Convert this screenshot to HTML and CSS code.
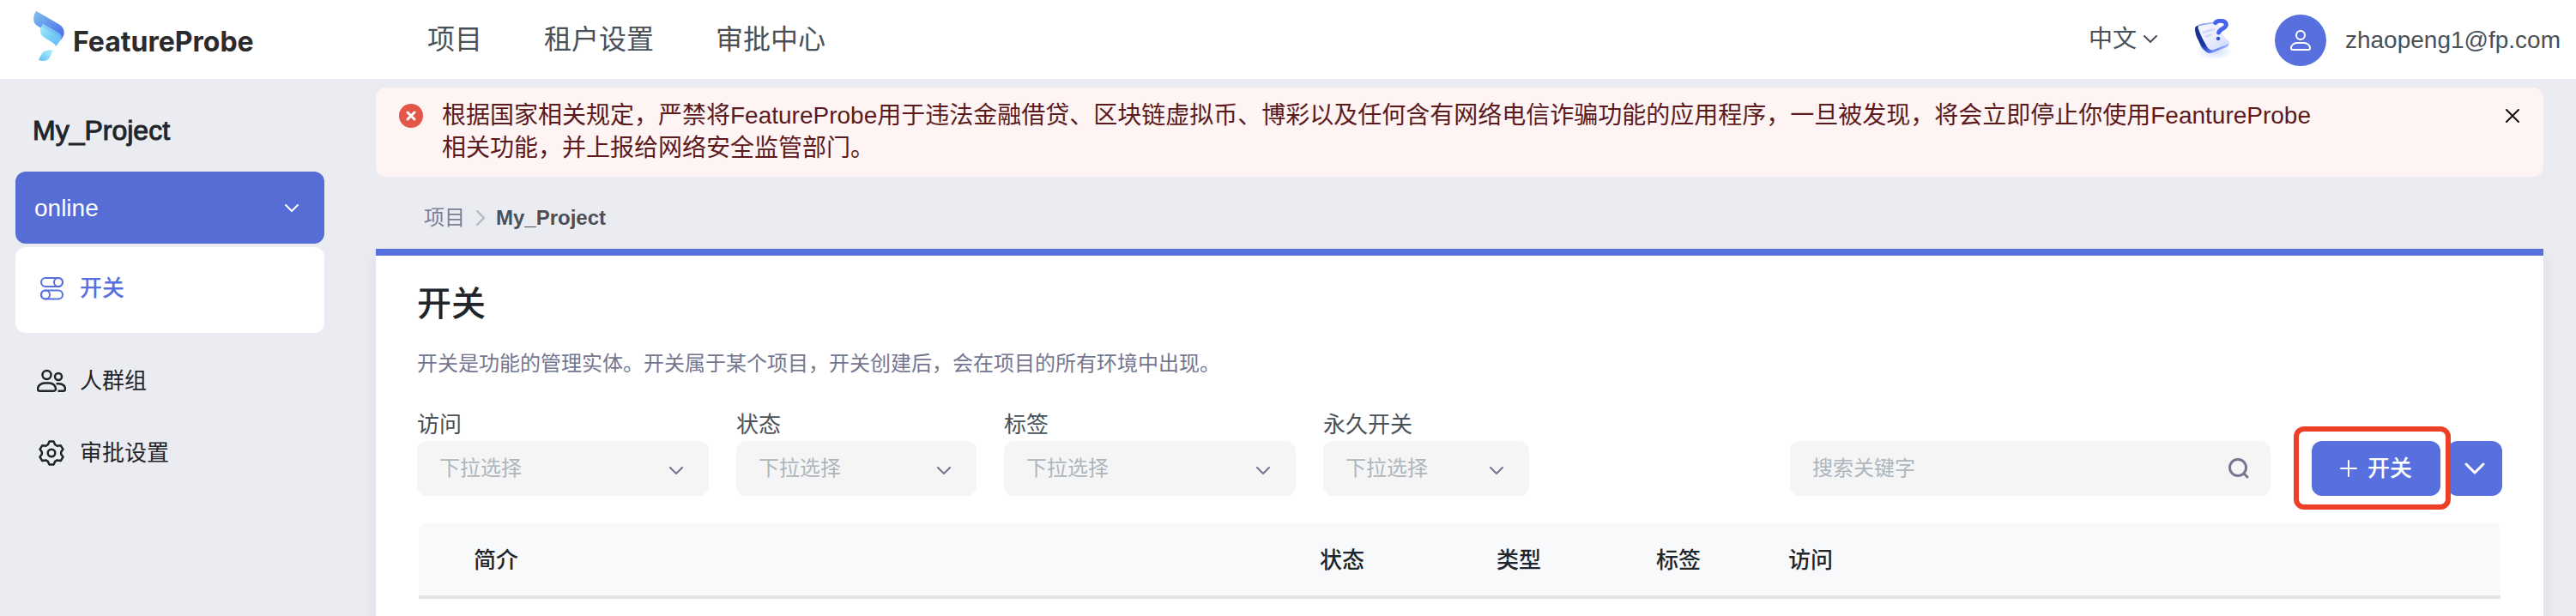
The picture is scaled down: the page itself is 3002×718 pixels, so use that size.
FILE: index.html
```html
<!DOCTYPE html>
<html lang="zh-CN">
<head>
<meta charset="utf-8">
<meta name="viewport" content="width=device-width, initial-scale=1">
<title>FeatureProbe</title>
<link rel="stylesheet" href="styles.css">
</head>
<body>
<header class="header">
  <a class="brand" href="#">
    <svg class="brand-mark" viewBox="0 0 108 177" aria-hidden="true">
      <defs>
        <linearGradient id="g1" x1="0" y1="0" x2="1" y2="1"><stop offset="0" stop-color="#7cc0ef"/><stop offset="1" stop-color="#4a68e6"/></linearGradient>
        <linearGradient id="g2" x1="0" y1="0" x2="1" y2="1"><stop offset="0" stop-color="#a9f0f6"/><stop offset=".6" stop-color="#74cbf8"/><stop offset="1" stop-color="#6ab8fa"/></linearGradient>
        <linearGradient id="g3" x1="1" y1="0" x2="0" y2="1"><stop offset="0" stop-color="#b2f5f5"/><stop offset="1" stop-color="#62bcf8"/></linearGradient>
      </defs>
      <path fill="url(#g1)" d="M10 0 88 45C104 54 108 68 107 78 106 86 101 94 98 99L16 53C0 44 0 32 1 20 2 12 6 5 10 0Z"/>
      <path fill="url(#g2)" d="M33 44 88 76C98 82 101 90 97 98L79 123C77 117 70 112 62 107L34 89C24 83 22 66 26 57Z"/>
      <path fill="#4f8cf0" opacity=".25" d="M33 44 88 76C98 82 101 90 97 98 92 88 84 84 76 80L28 54Z"/>
      <path fill="url(#g3)" d="M69 137C52 133 35 137 28 151L18 170C28 176 44 176 53 167 60 159 63 146 69 137Z"/>
    </svg>
    <span class="brand-name">FeatureProbe</span>
  </a>
  <nav class="nav">
    <a href="#">项目</a>
    <a href="#">租户设置</a>
    <a href="#">审批中心</a>
  </nav>
  <div class="account">
    <button class="lang" type="button">中文
      <svg class="chev" viewBox="0 0 16 10" aria-hidden="true"><path d="M1 1l7 7 7-7"/></svg>
    </button>
    <a class="help" href="#" aria-label="帮助">
      <svg viewBox="0 0 132 144" aria-hidden="true">
        <defs>
          <linearGradient id="h1" x1="0" y1="0" x2="1" y2=".7"><stop offset="0" stop-color="#1c2f86"/><stop offset=".5" stop-color="#17349f"/><stop offset=".75" stop-color="#5c7cf0"/><stop offset="1" stop-color="#9fb4ff"/></linearGradient>
          <linearGradient id="h2" x1="0" y1="0" x2="1" y2="1"><stop offset="0" stop-color="#f6f7ff"/><stop offset=".6" stop-color="#e8ebfe"/><stop offset="1" stop-color="#c9d2fc"/></linearGradient>
          <radialGradient id="h3"><stop offset="0" stop-color="#b9c8ff" stop-opacity=".7"/><stop offset="1" stop-color="#b9c8ff" stop-opacity="0"/></radialGradient>
        </defs>
        <ellipse cx="68" cy="112" rx="64" ry="32" fill="url(#h3)"/>
        <path fill="#8fa7f8" d="M4 32C8 22 14 18 22 17L62 12 80 24 46 118C34 112 24 106 20 98Z"/>
        <path fill="url(#h1)" d="M0 34C1 27 5 24 11 24L42 98 60 110 118 84C120 90 116 96 108 100L62 118C52 122 44 121 38 114 26 102 18 90 12 76 4 62 0 48 0 34Z"/>
        <path fill="url(#h2)" d="M10 30C11 26 14 25 18 24L70 14C80 14 86 22 88 32 92 48 104 66 119 79 121 84 118 87 112 90L66 107C56 110 50 108 44 99 30 80 18 54 10 30Z"/>
        <path fill="#cfd6f8" d="M26 44 66 32 68 39 28 51ZM34 59 56 52 59 59 37 66Z"/>
        <path fill="none" stroke="#4363ea" stroke-width="15" stroke-linecap="round" d="M71 14C80 3 107 5 109 19 111 33 85 34 83 48"/>
        <circle cx="81" cy="69" r="7" fill="#3557dd"/>
      </svg>
    </a>
    <a class="user" href="#">
      <span class="avatar">
        <svg viewBox="0 0 26 26" aria-hidden="true"><circle cx="13" cy="7" r="5"/><path d="M9 16h8c4 0 7 3 7 6 0 1-1 2-2 2H4c-1 0-2-1-2-2 0-3 3-6 7-6Z"/></svg>
      </span>
      <span>zhaopeng1@fp.com</span>
    </a>
  </div>
</header>

<div class="layout">
  <aside class="sidebar">
    <h2 class="project">My_Project</h2>
    <button class="env" type="button">online
      <svg class="chev" viewBox="0 0 16 10" aria-hidden="true"><path d="M1 1l7 7 7-7"/></svg>
    </button>
    <nav class="menu">
      <a class="menu-item active" href="#">
        <svg viewBox="0 0 34 30" aria-hidden="true"><rect x="5" y="3" width="25" height="10" rx="5"/><circle cx="25" cy="8" r="5"/><rect x="5" y="17.5" width="25" height="10" rx="5"/><circle cx="10" cy="22.5" r="5"/></svg>
        开关
      </a>
      <a class="menu-item" href="#">
        <svg viewBox="0 0 34 30" aria-hidden="true"><circle cx="11.500" cy="8" r="5"/><circle cx="25" cy="10" r="4"/><path d="M9 17.500h5.500c4 0 7.500 3 7.500 7 0 1-1 2.200-2.200 2.200H3.200C2 26.700 1 25.700 1 24.500c0-4 4-7 8-7ZM23.500 18.200h2.500c4 0 7 2.800 7 6.300 0 1.200-1 2.200-2.200 2.200H25.500"/></svg>
        人群组
      </a>
      <a class="menu-item" href="#">
        <svg viewBox="0 0 34 30" aria-hidden="true"><circle cx="17" cy="15" r="4.300"/><path d="M14.500 1.500h5l1.600 3.800 2.500 1.500 4.200-.5 2.700 4.300-2.300 3.200v2.600l2.300 3.200-2.700 4.400-4.200-.6-2.500 1.500-1.600 3.700h-5l-1.600-3.700-2.500-1.500-4.200.6-2.700-4.400 2.300-3.200v-2.600l-2.300-3.200 2.700-4.300 4.200.5 2.500-1.500Z"/></svg>
        审批设置
      </a>
    </nav>
  </aside>

  <main class="main">
    <div class="alert" role="alert">
      <svg class="alert-icon" viewBox="0 0 28 28" aria-hidden="true"><circle cx="14" cy="14" r="14"/><path d="M10 10l8 8M18 10l-8 8"/></svg>
      <p>根据国家相关规定，严禁将FeatureProbe用于违法金融借贷、区块链虚拟币、博彩以及任何含有网络电信诈骗功能的应用程序，一旦被发现，将会立即停止你使用FeantureProbe<br>相关功能，并上报给网络安全监管部门。</p>
      <button class="close" type="button" aria-label="关闭">
        <svg viewBox="0 0 16 16" aria-hidden="true"><path d="M1 1l14 14M15 1L1 15"/></svg>
      </button>
    </div>

    <nav class="crumbs" aria-label="面包屑">
      <a href="#">项目</a>
      <svg viewBox="0 0 10 18" aria-hidden="true"><path d="M1 1l8 8-8 8"/></svg>
      <b>My_Project</b>
    </nav>

    <section class="content">
      <h1>开关</h1>
      <p class="desc">开关是功能的管理实体。开关属于某个项目，开关创建后，会在项目的所有环境中出现。</p>

      <div class="toolbar">
        <div class="field wide">
          <label for="visit">访问</label>
          <div class="select"><select id="visit"><option>下拉选择</option></select><svg class="chev" viewBox="0 0 16 10" aria-hidden="true"><path d="M1 1l7 7 7-7"/></svg></div>
        </div>
        <div class="field medium">
          <label for="status">状态</label>
          <div class="select"><select id="status"><option>下拉选择</option></select><svg class="chev" viewBox="0 0 16 10" aria-hidden="true"><path d="M1 1l7 7 7-7"/></svg></div>
        </div>
        <div class="field wide">
          <label for="tag">标签</label>
          <div class="select"><select id="tag"><option>下拉选择</option></select><svg class="chev" viewBox="0 0 16 10" aria-hidden="true"><path d="M1 1l7 7 7-7"/></svg></div>
        </div>
        <div class="field narrow">
          <label for="permanent">永久开关</label>
          <div class="select"><select id="permanent"><option>下拉选择</option></select><svg class="chev" viewBox="0 0 16 10" aria-hidden="true"><path d="M1 1l7 7 7-7"/></svg></div>
        </div>
        <div class="search">
          <input type="text" placeholder="搜索关键字" aria-label="搜索关键字">
          <svg viewBox="0 0 26 26" aria-hidden="true"><circle cx="12" cy="12" r="9.500"/><path d="M19 19l4 4"/></svg>
        </div>
        <div class="actions">
          <div class="highlight">
            <button class="btn create" type="button">
              <svg viewBox="0 0 20 20" aria-hidden="true"><path d="M10 1v18M1 10h18"/></svg>
              开关
            </button>
          </div>
          <button class="btn more" type="button" aria-label="更多">
            <svg viewBox="0 0 24 16" aria-hidden="true"><path d="M2 3l10 10L22 3"/></svg>
          </button>
        </div>
      </div>

      <table class="table">
        <thead>
          <tr><th>简介</th><th class="c-status">状态</th><th class="c-type">类型</th><th class="c-tag">标签</th><th class="c-visit">访问</th></tr>
        </thead>
      </table>
    </section>
  </main>
</div>
</body>
</html>
```
FILE: styles.css
```css
* { box-sizing: border-box; }
body {
  margin: 0;
  min-height: 100vh;
  display: flex;
  flex-direction: column;
  background: #ebecf1;
  color: #212529;
  font: 26px/38px "Liberation Sans", "Noto Sans CJK SC", sans-serif;
}
a { color: inherit; text-decoration: none; }
button, input, select { font: inherit; color: inherit; border: 0; background: none; margin: 0; padding: 0; }
button { cursor: pointer; }
h1, h2, p { margin: 0; }
svg { display: block; flex: none; fill: none; stroke-linecap: round; stroke-linejoin: round; }
.chev { width: 16px; height: 10px; stroke: currentColor; stroke-width: 2; }

.header {
  display: flex;
  align-items: center;
  height: 92px;
  padding-right: 18px;
  background: #fff;
  color: #495057;
}
.brand { display: flex; gap: 10px; width: 498px; padding: 0 0 8px 39px; }
.brand-mark { width: 36px; height: 59px; }
.brand-name { padding-top: 17px; font: 700 32px/38px Inter, "Liberation Sans", sans-serif; color: #2b2b2b; }
.nav { display: flex; gap: 72px; font-size: 32px; }
.account { display: flex; align-items: center; margin-left: auto; font-size: 28px; }
.lang { display: flex; align-items: center; gap: 8px; margin-right: 44px; }
.help { margin-right: 49px; }
.help svg { width: 44px; height: 48px; }
.user { display: flex; align-items: center; gap: 22px; padding-top: 2px; }
.avatar { display: grid; place-items: center; width: 60px; height: 60px; border-radius: 50%; background: #5870dd; }
.avatar svg { width: 26px; height: 26px; stroke: #fff; stroke-width: 2; }

.layout { flex: 1; display: flex; }
.sidebar { width: 438px; padding: 40px 60px 0 18px; flex: none; }
.project { padding: 0 20px; font-size: 32px; line-height: 40px; font-weight: 400; -webkit-text-stroke: 1px currentColor; }
.env {
  display: flex;
  align-items: center;
  justify-content: space-between;
  width: 100%;
  height: 84px;
  margin-top: 28px;
  padding: 2px 30px 0 22px;
  border-radius: 12px;
  background: #566dd6;
  color: #fff;
  font-size: 28px;
}
.menu { margin-top: 4px; }
.menu-item { display: flex; align-items: center; gap: 16px; height: 84px; padding: 0 25px; }
.menu-item svg { width: 34px; height: 30px; stroke: currentColor; stroke-width: 2.5; }
.menu-item.active { height: 100px; margin-bottom: 14px; padding-bottom: 4px; border-radius: 12px; background: #fff; color: #5870dd; font-weight: 500; }
.menu-item.active svg { stroke-width: 2; }

.main { flex: 1; min-width: 0; display: flex; flex-direction: column; padding: 10px 38px 0 0; }
.alert { display: flex; align-items: flex-start; padding: 14px 28px 14px 27px; border-radius: 12px; background: #fdf4f3; color: #5c1a1d; font-size: 28px; }
.alert-icon { width: 28px; height: 28px; margin: 5px 22px 0 0; }
.alert-icon circle { fill: #e45648; }
.alert-icon path { stroke: #fff; stroke-width: 3; }
.close { margin: 11px 0 0 auto; color: #111; }
.close svg { width: 16px; height: 16px; stroke: currentColor; stroke-width: 2; }
.crumbs { display: flex; align-items: center; gap: 13px; height: 84px; padding: 12px 56px 0; font-size: 24px; color: #7d7f96; }
.crumbs svg { width: 10px; height: 18px; stroke: #adb5bd; stroke-width: 2; }
.crumbs b { color: #495057; }

.content { flex: 1; padding: 32px 48px 0; border-top: 8px solid #5870dd; background: #fff; box-shadow: 0 10px 20px rgba(40, 40, 80, .08); }
h1 { font-size: 40px; line-height: 48px; font-weight: 500; }
.desc { margin: 30px 0 36px; font-size: 24px; line-height: 32px; color: #74768f; }

.toolbar { display: flex; align-items: flex-end; gap: 32px; }
.field { display: flex; flex-direction: column; color: #495057; }
.wide { width: 340px; }
.medium { width: 280px; }
.narrow { width: 240px; }
.select { position: relative; color: #74768f; }
.select select { width: 100%; height: 64px; padding: 0 26px; border-radius: 12px; background: #f5f5f5; appearance: none; font-size: 24px; color: #adb5bd; }
.select .chev { position: absolute; right: 30px; top: 30px; pointer-events: none; }
.search { display: flex; align-items: center; width: 560px; height: 64px; margin-left: auto; padding: 0 24px 0 26px; border-radius: 12px; background: #f5f5f5; color: #74768f; }
.search input { flex: 1; min-width: 0; font-size: 24px; outline: 0; }
.search input::placeholder { color: #adb5bd; opacity: 1; }
.search svg { width: 26px; height: 26px; stroke: currentColor; stroke-width: 3; }
.actions { display: flex; gap: 8px; margin-left: 16px; }
.highlight { position: relative; }
.highlight::after { content: ""; position: absolute; z-index: 1; inset: -17px -12px -16px -21px; border: 6px solid #ec4026; border-radius: 12px; pointer-events: none; }
.btn { display: flex; align-items: center; justify-content: center; gap: 12px; height: 64px; border-radius: 12px; background: #5870dd; color: #fff; font-weight: 500; }
.btn svg { stroke: currentColor; stroke-width: 2; }
.create { width: 150px; }
.create svg { width: 20px; height: 20px; }
.more { width: 64px; }
.more svg { width: 24px; height: 16px; stroke-width: 3; }

.table { width: 100%; margin-top: 32px; border: 0 solid transparent; border-width: 0 2px; border-spacing: 0; table-layout: fixed; }
.table th { height: 88px; padding: 2px 0 0; border-bottom: 4px solid #e2e4e6; background: #f8f9fb; text-align: left; font-weight: 500; }
.table th:first-child { padding-left: 64px; border-top-left-radius: 8px; }
.table th:last-child { border-top-right-radius: 8px; }
.table .c-status { width: 206px; }
.table .c-type { width: 186px; }
.table .c-tag { width: 154px; }
.table .c-visit { width: 830px; }
```
